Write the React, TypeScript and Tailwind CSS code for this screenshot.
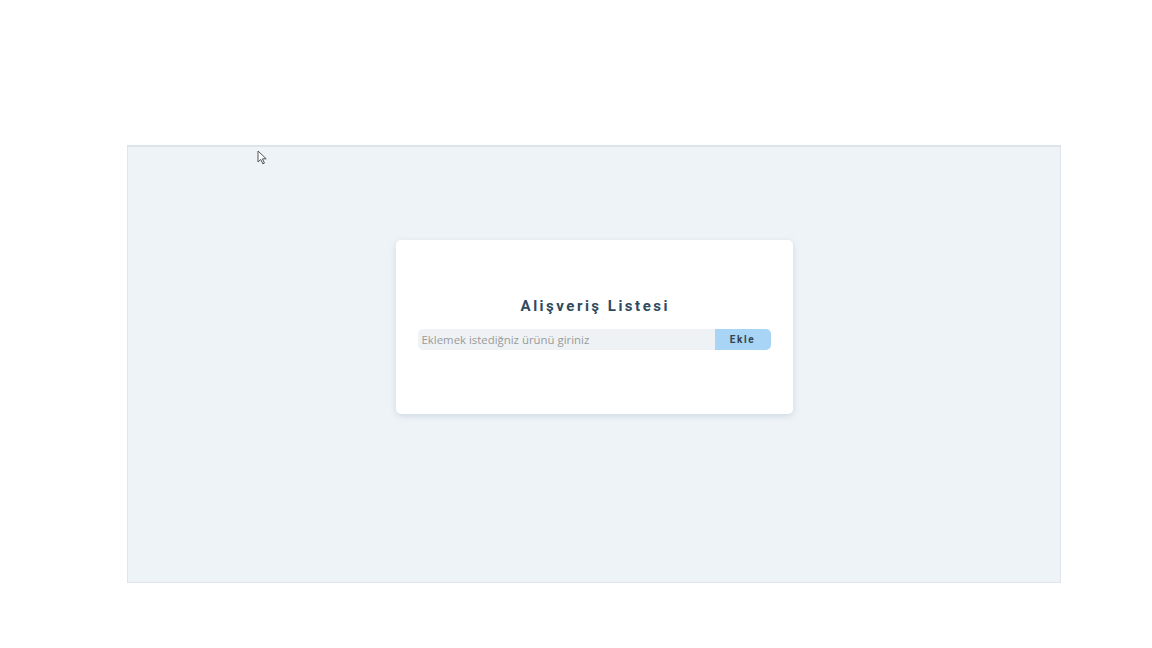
import React from "react";

export default function App() {
  return (
    <div className="w-[1152px] h-[648px] bg-white pt-[145px] pl-[127px] relative" style={{ fontFamily: "'Open Sans', sans-serif" }}>
      <div className="w-[934px] h-[438px] bg-[#eef3f7] border border-[#dfe5ea] border-t-2 border-t-[#dce3e9] flex justify-center pt-[93px]">
        <div className="w-[397px] h-[174px] bg-white rounded-[5px] shadow-[0_2px_6px_rgba(150,170,190,0.35)] flex flex-col items-center px-[22px] pt-[56px]">
          <h1 className="text-[15px] font-bold tracking-[2.5px] pl-[2.5px] text-[#2e4a5e] leading-[20px] h-[20px]" style={{ fontFamily: "Roboto, sans-serif" }}>
            Alişveriş Listesi
          </h1>
          <div className="flex w-full mt-[13px] h-[21px]">
            <input
              className="flex-1 bg-[#eef2f5] rounded-l-[5px] px-[4px] text-[11.4px] text-[#555] placeholder-[#9a9a9a] outline-none h-[21px]"
              placeholder="Eklemek istediğniz ürünü giriniz"
              style={{ fontFamily: "'Open Sans', sans-serif" }}
            />
            <button className="w-[56px] h-[21px] bg-[#a8d4f5] rounded-r-[5px] text-[10px] font-bold tracking-[1.6px] text-[#34434e]" style={{ fontFamily: "Roboto, sans-serif" }}>
              Ekle
            </button>
          </div>
        </div>
      </div>
      <svg className="absolute left-[257px] top-[150px]" width="11" height="15" viewBox="0 0 11 15">
        <path d="M1 1 L1 12 L3.8 9.4 L5.8 13.8 L7.4 13.1 L5.5 8.8 L9.2 8.8 Z" fill="white" stroke="#555" strokeWidth="1" strokeLinejoin="round" />
      </svg>
    </div>
  );
}
